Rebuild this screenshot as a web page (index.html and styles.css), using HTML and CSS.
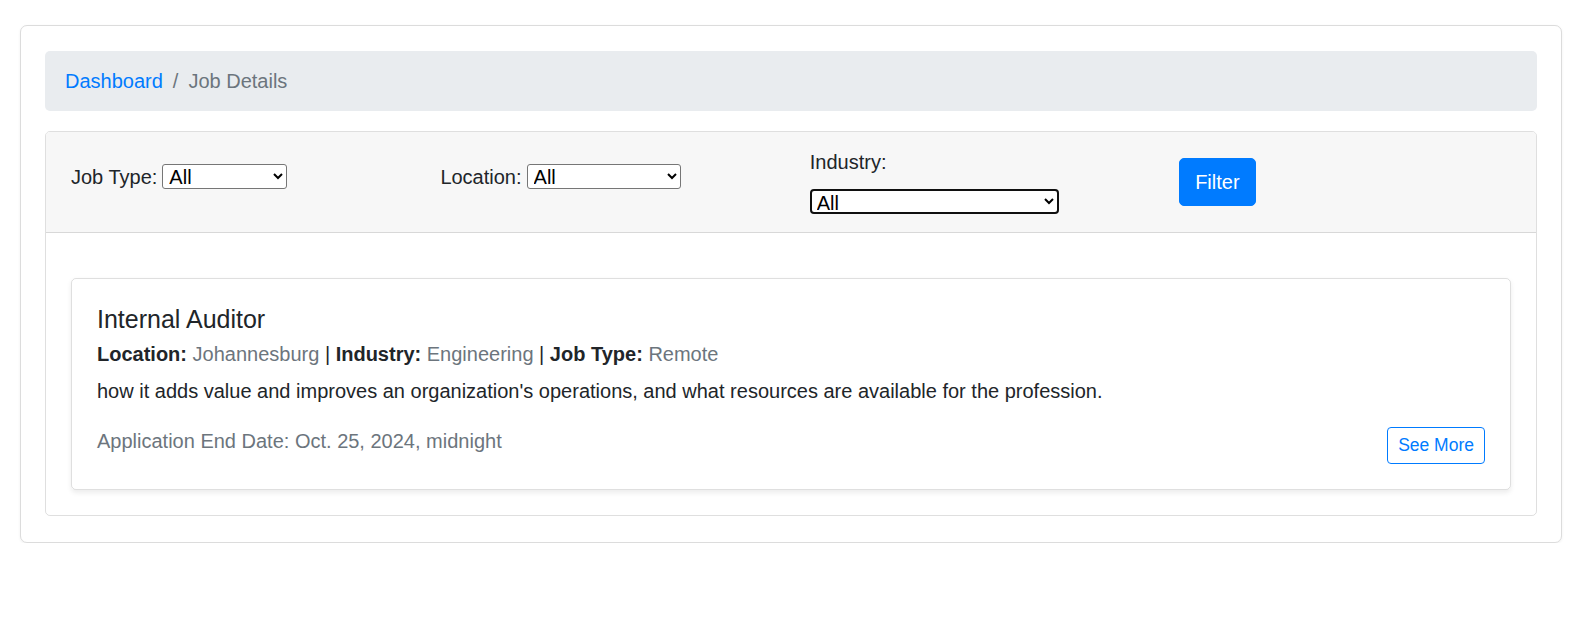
FILE: index.html
```html
<!DOCTYPE html>
<html lang="en">
<head>
<meta charset="utf-8">
<title>Job Details</title>
<link rel="stylesheet" href="styles.css">
</head>
<body>
<div class="page">
  <div class="panel">
    <nav class="breadcrumb">
      <a class="crumb-link" href="#">Dashboard</a>
      <span class="crumb-sep">/</span>
      <span class="crumb-current">Job Details</span>
    </nav>

    <div class="filter-card">
      <form class="filter-header">
        <div class="filter-col">
          <label class="filter-label" for="job-type">Job Type:</label>
          <select id="job-type" class="sel sel-type"><option>All</option></select>
        </div>
        <div class="filter-col">
          <label class="filter-label" for="location">Location:</label>
          <select id="location" class="sel sel-location"><option>All</option></select>
        </div>
        <div class="filter-col filter-col-stack">
          <label class="filter-label" for="industry">Industry:</label>
          <select id="industry" class="sel sel-industry is-focused"><option>All</option></select>
        </div>
        <div class="filter-col-btn">
          <button type="button" class="btn-filter">Filter</button>
        </div>
      </form>

      <div class="filter-body">
        <div class="job-card">
          <h5 class="job-title">Internal Auditor</h5>
          <h6 class="job-meta"><strong>Location:</strong> <span class="muted">Johannesburg</span> | <strong>Industry:</strong> <span class="muted">Engineering</span> | <strong>Job Type:</strong> <span class="muted">Remote</span></h6>
          <p class="job-desc">how it adds value and improves an organization's operations, and what resources are available for the profession.</p>
          <div class="job-footer">
            <span class="job-date">Application End Date: Oct. 25, 2024, midnight</span>
            <a class="btn-more" href="#">See More</a>
          </div>
        </div>
      </div>
    </div>
  </div>
</div>
</body>
</html>
```

FILE: styles.css
```css
* { box-sizing: border-box; }

html, body {
  margin: 0;
  padding: 0;
  background: #ffffff;
}

body {
  font-family: "Liberation Sans", Arial, sans-serif;
  font-size: 20px;
  line-height: 1.5;
  color: #212529;
}

.page {
  padding: 25px 11px 0 20px;
}

.panel {
  border: 1px solid #dcdcdc;
  border-radius: 7px;
  box-shadow: 0 1px 3px rgba(0, 0, 0, 0.06);
  padding: 25px 24px 26px;
  background: #fff;
}

/* breadcrumb */
.breadcrumb {
  display: flex;
  align-items: center;
  background: #e9ecef;
  border-radius: 5px;
  padding: 15px 20px;
  line-height: 30px;
  margin-bottom: 20px;
}

.crumb-link {
  color: #007bff;
  text-decoration: none;
}

.crumb-sep {
  color: #6c757d;
  padding: 0 10px;
}

.crumb-current {
  color: #6c757d;
}

/* filter card */
.filter-card {
  border: 1px solid rgba(0, 0, 0, 0.125);
  border-radius: 5px;
  overflow: hidden;
}

.filter-header {
  margin: 0;
  display: grid;
  grid-template-columns: repeat(4, 1fr);
  column-gap: 37.5px;
  align-items: center;
  padding: 15px 25px;
  background: #f7f7f7;
  border-bottom: 1px solid rgba(0, 0, 0, 0.125);
}

.filter-col {
  display: flex;
  align-items: center;
  gap: 5px;
  padding-bottom: 10px;
  height: 40px;
}

.filter-col-stack {
  display: flex;
  flex-direction: column;
  align-items: flex-start;
  gap: 0;
  height: auto;
  padding-bottom: 3px;
}

.filter-label {
  line-height: 30px;
  white-space: nowrap;
}

.sel {
  font-family: "Liberation Sans", Arial, sans-serif;
  font-size: 20px;
  height: 25px;
  padding: 0 0 0 2px;
  border: 1px solid #767676;
  border-radius: 3px;
  background-color: #fff;
  color: #000;
}

.sel-type { width: 125px; }
.sel-location { width: 154px; }

.sel-industry {
  width: 249px;
  margin-top: 11.5px;
}

.is-focused {
  border: 2px solid #101010;
  border-radius: 4px;
  padding-left: 1px;
}

.filter-col-btn {
  display: flex;
  align-items: center;
}

.btn-filter {
  font-family: "Liberation Sans", Arial, sans-serif;
  font-size: 20px;
  line-height: 30px;
  padding: 8px 15px;
  color: #fff;
  background: #007bff;
  border: 1px solid #007bff;
  border-radius: 5px;
}

.filter-body {
  padding: 45px 25px 25px;
}

/* job card */
.job-card {
  border: 1px solid rgba(0, 0, 0, 0.125);
  border-radius: 5px;
  box-shadow: 0 2.5px 5px rgba(0, 0, 0, 0.075);
  padding: 25px;
}

.job-title {
  margin: 0 0 15px;
  font-size: 25px;
  line-height: 30px;
  font-weight: 400;
}

.job-meta {
  margin: -6.5px 0 0;
  font-size: 20px;
  line-height: 24px;
  font-weight: 400;
}

.job-meta strong {
  font-weight: 700;
}

.muted {
  color: #6c757d;
}

.job-desc {
  margin: 10px 0 20px;
  line-height: 30px;
}

.job-footer {
  display: flex;
  justify-content: space-between;
  align-items: flex-start;
}

.job-date {
  color: #6c757d;
  line-height: 30px;
}

.btn-more {
  display: inline-block;
  height: 37px;
  margin-top: 1px;
  padding: 0 10px;
  line-height: 35px;
  font-size: 17.5px;
  color: #007bff;
  border: 1px solid #007bff;
  border-radius: 4px;
  text-decoration: none;
}
```
